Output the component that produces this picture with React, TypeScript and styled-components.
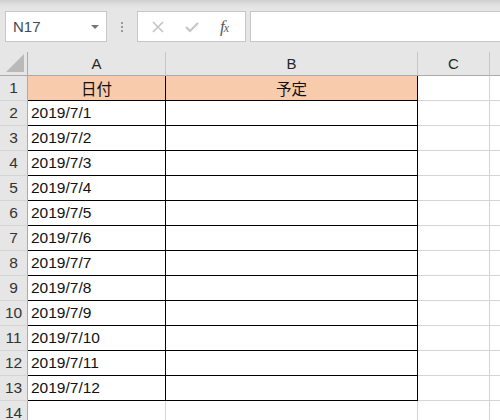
import styled, { createGlobalStyle } from 'styled-components';

const GlobalStyle = createGlobalStyle`
  html, body {
    margin: 0;
    padding: 0;
    width: 500px;
    height: 420px;
    overflow: hidden;
    background: #ffffff;
    font-family: "Liberation Sans", "Noto Sans CJK JP", sans-serif;
  }
`;

const COLUMNS = ['A', 'B', 'C'];

const DATES = Array.from({ length: 12 }, (_, i) => `2019/7/${i + 1}`);

const App = () => {
  return (
    <>
      <GlobalStyle />
      <Page>
        <FormulaBar>
          <NameBox>
            <NameText>N17</NameText>
            <DropArrow />
          </NameBox>
          <Grip>
            <GripDot />
            <GripDot />
            <GripDot />
          </Grip>
          <FuncBox>
            <FuncIcon>
              <svg width="14" height="14" viewBox="0 0 14 14">
                <path d="M2 2 L12 12 M12 2 L2 12" stroke="#c4c4c4" strokeWidth="1.6" fill="none" />
              </svg>
            </FuncIcon>
            <FuncIcon>
              <svg width="16" height="14" viewBox="0 0 16 14">
                <path d="M2 7 L6 11 L14 3" stroke="#c4c4c4" strokeWidth="2" fill="none" />
              </svg>
            </FuncIcon>
            <FxLabel>
              f<small>x</small>
            </FxLabel>
          </FuncBox>
          <FormulaInput />
        </FormulaBar>

        <Sheet>
          <CornerCell>
            <CornerTriangle />
          </CornerCell>
          {COLUMNS.map((col) => (
            <ColHeader key={col}>{col}</ColHeader>
          ))}
          <ColHeader />

          <RowHeader>1</RowHeader>
          <Cell $bordered $fill $center>日付</Cell>
          <Cell $bordered $fill $center>予定</Cell>
          <Cell />
          <Cell />

          {DATES.map((date, i) => (
            <Row key={date} n={i + 2} date={date} />
          ))}

          <RowHeader>14</RowHeader>
          <Cell />
          <Cell />
          <Cell />
          <Cell />
        </Sheet>
      </Page>
    </>
  );
};

const Row = ({ n, date }: { n: number; date: string }) => (
  <>
    <RowHeader>{n}</RowHeader>
    <Cell $bordered>{date}</Cell>
    <Cell $bordered />
    <Cell />
    <Cell />
  </>
);

export default App;

const Page = styled.div`
  width: 500px;
  height: 420px;
  overflow: hidden;
  background: #e6e6e6;
`;

const FormulaBar = styled.div`
  height: 52px;
  box-sizing: border-box;
  padding: 11px 0 0 5px;
  display: flex;
  align-items: flex-start;
  background: linear-gradient(to bottom, #cfcfcf 0px, #e0e0e0 5px, #e6e6e6 9px);
`;

const NameBox = styled.div`
  width: 102px;
  height: 31px;
  box-sizing: border-box;
  border: 1px solid #c6c6c6;
  background: #ffffff;
  display: flex;
  align-items: center;
  padding: 0 7px 0 7px;
`;

const NameText = styled.span`
  flex: 1;
  font-size: 15px;
  color: #404a58;
`;

const DropArrow = styled.span`
  width: 0;
  height: 0;
  border-left: 4px solid transparent;
  border-right: 4px solid transparent;
  border-top: 4px solid #777777;
  margin-top: 1px;
`;

const Grip = styled.div`
  width: 30px;
  height: 31px;
  display: flex;
  flex-direction: column;
  align-items: center;
  justify-content: center;
  gap: 2px;
`;

const GripDot = styled.span`
  width: 2px;
  height: 2px;
  background: #9a9a9a;
`;

const FuncBox = styled.div`
  width: 109px;
  height: 31px;
  box-sizing: border-box;
  border: 1px solid #c6c6c6;
  background: #ffffff;
  display: flex;
  align-items: center;
  padding-left: 12px;
  gap: 18px;
`;

const FuncIcon = styled.span`
  display: flex;
  width: 16px;
  justify-content: center;
`;

const FxLabel = styled.span`
  font-family: "Liberation Serif", "DejaVu Serif", serif;
  font-style: italic;
  font-size: 17px;
  color: #5a5a5a;
  margin-left: 2px;
  letter-spacing: -1px;

  small {
    font-size: 12px;
  }
`;

const FormulaInput = styled.div`
  flex: 1;
  height: 31px;
  box-sizing: border-box;
  margin-left: 4px;
  border: 1px solid #c6c6c6;
  border-right: none;
  background: #ffffff;
`;

const Sheet = styled.div`
  display: grid;
  grid-template-columns: 28px 138px 252px 72px 100px;
  grid-template-rows: 24px repeat(14, 25px);
  background: #ffffff;
`;

const CornerCell = styled.div`
  position: relative;
  background: #e6e6e6;
  border-right: 1px solid #ababab;
  border-bottom: 1px solid #ababab;
`;

const CornerTriangle = styled.span`
  position: absolute;
  right: 3px;
  bottom: 3px;
  width: 0;
  height: 0;
  border-left: 18px solid transparent;
  border-bottom: 18px solid #b9b9b9;
`;

const ColHeader = styled.div`
  background: #e6e6e6;
  border-right: 1px solid #c6c6c6;
  border-bottom: 1px solid #ababab;
  display: flex;
  align-items: center;
  justify-content: center;
  font-size: 15px;
  color: #262626;
`;

const RowHeader = styled.div`
  background: #e6e6e6;
  border-right: 1px solid #ababab;
  border-bottom: 1px solid #d4d4d4;
  display: flex;
  align-items: center;
  justify-content: center;
  font-size: 15.5px;
  color: #333333;
`;

const Cell = styled.div<{ $bordered?: boolean; $fill?: boolean; $center?: boolean }>`
  box-sizing: border-box;
  border-right: 1px solid ${(p) => (p.$bordered ? '#000000' : '#d4d4d4')};
  border-bottom: 1px solid ${(p) => (p.$bordered ? '#000000' : '#d4d4d4')};
  background: ${(p) => (p.$fill ? '#f8cbad' : '#ffffff')};
  display: flex;
  align-items: center;
  justify-content: ${(p) => (p.$center ? 'center' : 'flex-start')};
  padding-left: ${(p) => (p.$center ? '0' : '3px')};
  font-size: 15.5px;
  color: #111111;
  white-space: nowrap;
`;
